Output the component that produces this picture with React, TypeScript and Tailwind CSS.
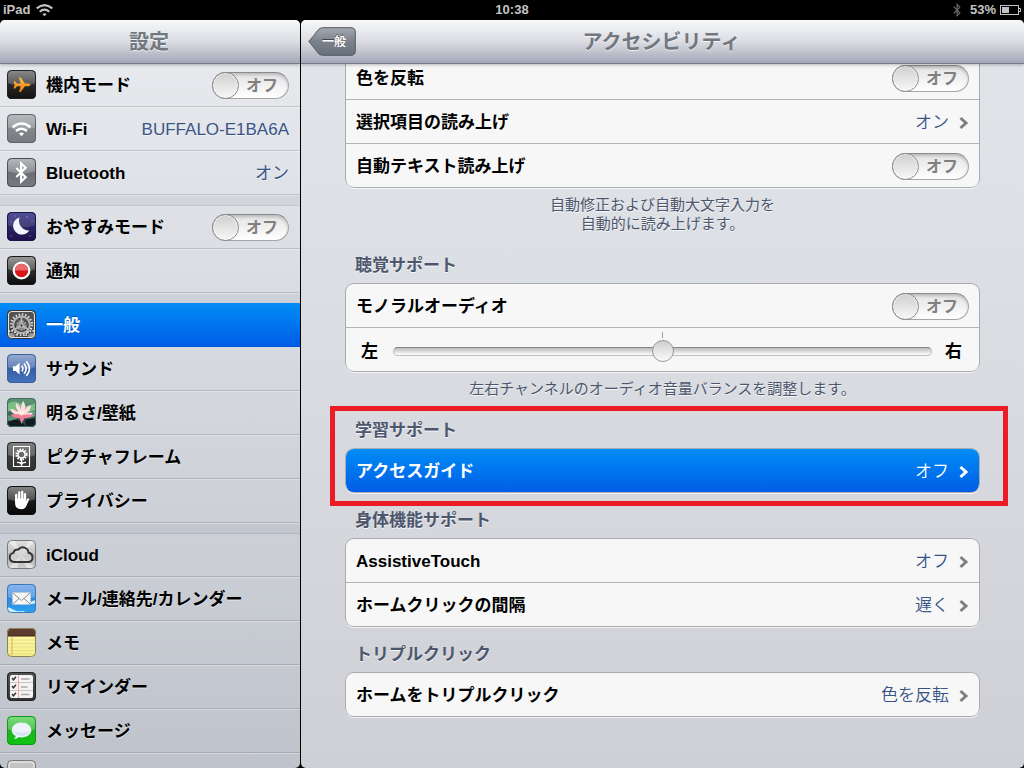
import { useState, type ReactNode } from "react";
import { FaBluetoothB, FaHandPaper, FaPlane } from "react-icons/fa";

/* ---------- Icons ---------- */

type TileProps = {
  id: string;
  top: string;
  bottom: string;
  mid?: string;
  border?: string;
  gloss?: number;
  children?: ReactNode;
};

function Tile({ id, top, bottom, mid, border = "#00000080", gloss = 0.22, children }: TileProps) {
  return (
    <svg viewBox="0 0 29 29" className="size-[29px] shrink-0" aria-hidden="true">
      <defs>
        <linearGradient id={`${id}-bg`} x1="0" y1="0" x2="0" y2="1">
          <stop offset="0" stopColor={top} />
          {mid && <stop offset="0.5" stopColor={mid} />}
          <stop offset="1" stopColor={bottom} />
        </linearGradient>
        <clipPath id={`${id}-clip`}>
          <rect width="29" height="29" rx="4.5" />
        </clipPath>
      </defs>
      <g clipPath={`url(#${id}-clip)`}>
        <rect width="29" height="29" fill={`url(#${id}-bg)`} />
        <path d="M0 0h29v13q-14.500 5-29 0z" fill="#fff" opacity={gloss} />
        {children}
      </g>
      <rect x="0.5" y="0.5" width="28" height="28" rx="4" fill="none" stroke={border} />
    </svg>
  );
}

function WifiArcs({ color }: { color: string }) {
  return (
    <g fill="none" stroke={color}>
      <path d="M5.600 13.200q8.900-7.400 17.800 0" strokeWidth="2.500" />
      <path d="M9 17q5.500-4.600 11 0" strokeWidth="2.500" />
      <path d="M12 19.600q2.500-2 5 0l-2.500 2.600z" fill={color} stroke="none" />
    </g>
  );
}

const AirplaneIcon = () => (
  <Tile id="air" top="#6b6b6b" mid="#2a2a2a" bottom="#111" border="#222">
    <defs>
      <linearGradient id="air-o" x1="0" y1="0" x2="0" y2="1">
        <stop offset="0" stopColor="#ffc14d" />
        <stop offset="1" stopColor="#f07800" />
      </linearGradient>
    </defs>
    <path
      d="M6.500 11.200h1.600l2 2.200h3.600L12 7.500h1.700l4.300 5.900h3.300q2 .3 2.300 1.400-.3 1.100-2.300 1.400H18l-4.300 5.900H12l1.700-5.900h-3.600l-2 2.200H6.500l1.200-3.600z"
      fill="url(#air-o)"
    />
  </Tile>
);

const WifiIcon = () => (
  <Tile id="wifi" top="#a3a7ab" mid="#83878c" bottom="#777b81" border="#5f6369">
    <WifiArcs color="#fff" />
  </Tile>
);

const BluetoothIcon = () => (
  <Tile id="bt" top="#a3a7ab" mid="#6c7076" bottom="#777b81" border="#4c4f55">
    <path d="M9.300 10l9.400 9.200-4.600 4.300v-18l4.600 4.300-9.400 9.200" fill="none" stroke="#fff" strokeWidth="2.200" />
  </Tile>
);

const MoonIcon = () => (
  <Tile id="moon" top="#39378a" mid="#2a2766" bottom="#1d0f4a" border="#1b1648" gloss={0.12}>
    <path d="M12.500 5.500a8.700 8.700 0 1 0 9.700 13A9.800 9.800 0 0 1 12.500 5.500z" fill="#f4f4ff" />
    <g fill="#a9a6e6">
      <circle cx="20" cy="5" r="0.700" />
      <circle cx="25" cy="9" r="0.500" />
      <circle cx="4" cy="10" r="0.600" />
      <circle cx="4" cy="24" r="0.600" />
      <circle cx="23" cy="24" r="0.600" />
      <circle cx="8" cy="4" r="0.500" />
    </g>
  </Tile>
);

const NotificationIcon = () => (
  <Tile id="notif" top="#808080" mid="#303030" bottom="#080808" border="#1a1a1a">
    <circle cx="14.500" cy="14.500" r="7.800" fill="#d91414" stroke="#fff" strokeWidth="2.200" />
    <path d="M7.800 14.500a6.700 6.700 0 0 1 13.400 0z" fill="#ea6a6a" />
  </Tile>
);

const GeneralIcon = () => (
  <Tile id="gen" top="#4c4c4c" bottom="#3c3c3c" border="#333" gloss={0.05}>
    <g fill="none">
      <circle cx="14.500" cy="14.800" r="10.300" stroke="#e0e0e0" strokeWidth="2.400" strokeDasharray="1.500 1.740" />
      <circle cx="14.500" cy="14.800" r="8.300" stroke="#b4b4b4" strokeWidth="2" />
      <circle cx="14.500" cy="15.500" r="4.500" fill="#858585" stroke="#a5a5a5" strokeWidth="1.600" strokeDasharray="1.800 1.200" />
      <path d="M14.500 14.500V6.500M14.500 15.500l7 4M14.500 15.500l-7 4" stroke="#b8b8b8" strokeWidth="1.600" />
      <circle cx="14.500" cy="15.500" r="1.700" fill="#333" stroke="#ddd" />
      <circle cx="4" cy="27" r="6" fill="#3a3a3a" stroke="#ddd" strokeWidth="2" strokeDasharray="1.500 1.300" />
      <circle cx="25" cy="27" r="6" fill="#3a3a3a" stroke="#ddd" strokeWidth="2" strokeDasharray="1.500 1.300" />
      <circle cx="4" cy="27" r="4" fill="#999" />
      <circle cx="25" cy="27" r="4" fill="#999" />
    </g>
    <rect x="1.500" y="1.500" width="26" height="26" rx="3.500" fill="none" stroke="#e4e4e4" strokeWidth="1.200" />
  </Tile>
);

const SoundIcon = () => (
  <Tile id="snd" top="#7b96c8" mid="#355da2" bottom="#4474bd" border="#3b5f9a">
    <path d="M6 12.200h2.600l4-3.400v11.600l-4-3.400H6z" fill="#fff" />
    <g fill="none" stroke="#fff" strokeWidth="1.600">
      <path d="M14.800 11.800q2.200 2.800 0 5.600" />
      <path d="M17 9.400q4.300 5.200 0 10.400" />
      <path d="M19.300 7.200q6.200 7.400 0 14.800" />
    </g>
  </Tile>
);

const BrightnessIcon = () => (
  <Tile id="lotus" top="#4d8a62" mid="#3d6d5c" bottom="#1d3a44" border="#3f6b60" gloss={0.1}>
    <path d="M0 6q8-5 14 0t15-2v8q-9 4-15 1T0 14z" fill="#7ebd84" />
    <path d="M0 17l10 2-2 5-8-2zM19 14l10-2v6l-8 2z" fill="#60967d" />
    <path d="M0 25q8-6 13-2l7 6H0zM18 22l11-2v9H20z" fill="#111c22" />
    <path d="M14.500 18Q5 17 3 11q5 0 8 3Q8 8 9 5q4 2 5 7 0-6 2-9 3 3 2 9 2-4 6-5 0 5-4 8 4-1 6 0-3 5-11.500 3z" fill="#fbdde0" />
    <path d="M14.500 17q-7-2-11 0 4 4 9 3l2 6 3-6q5 1 10-3-7-1-13 0z" fill="#ef7f96" />
    <path d="M11 13l3.500 5 3.500-5-3 1z" fill="#fff5cf" />
  </Tile>
);

const PictureFrameIcon = () => (
  <Tile id="frame" top="#5c5c5c" mid="#3c3c3c" bottom="#303030" border="#262626">
    <rect x="6.500" y="4.500" width="16" height="20" fill="none" stroke="#fff" strokeWidth="1.100" />
    <circle cx="14.500" cy="12.500" r="5" fill="none" stroke="#fff" strokeWidth="2.200" strokeDasharray="1.500 1.120" />
    <circle cx="14.500" cy="12.500" r="3.600" fill="none" stroke="#fff" strokeWidth="1.600" />
    <path d="M14.500 17v7M10 20.500q3.500-.5 4.500 2 1-2.500 4.500-2" fill="none" stroke="#fff" strokeWidth="1.300" />
  </Tile>
);

const PrivacyIcon = () => (
  <Tile id="priv" top="#666" mid="#1c1c1c" bottom="#050505" border="#111">
    <g stroke="#fff" strokeLinecap="round" fill="none">
      <path d="M9.200 15V9M12.200 14V6.500M15.200 14V6M18 15V8.200" strokeWidth="2.300" />
      <path d="M18.500 18.500l2.600-5" strokeWidth="2.200" />
    </g>
    <path d="M8.050 12.500h11.100v4l1.800-1.500-1.400 4.600q-1.200 3.600-5.300 3.600-6.200-.2-6.200-6.200z" fill="#fff" />
  </Tile>
);

const CloudIcon = () => (
  <Tile id="cloud" top="#d8d8d8" mid="#b0b0b0" bottom="#cfcfcf" border="#777">
    <path d="M0 0l14 15L8 0zM29 0L14 15 22 0zM0 29l14-14L10 29zM29 29L14 15l6 14z" fill="#fff" opacity="0.450" />
    <path
      d="M7 22a4.600 4.600 0 0 1-.5-9.100 3.800 3.800 0 0 1 4.800-3.300 5.700 5.700 0 0 1 10.200 3.200 4.700 4.700 0 0 1 .5 9.200z"
      fill="#e4e4e4"
      fillOpacity="0.500"
      stroke="#333"
      strokeWidth="1.900"
    />
  </Tile>
);

const MailIcon = () => (
  <Tile id="mail" top="#6d9ee8" mid="#2f86e0" bottom="#2aa6f0" border="#3a78b8">
    <path d="M0 23q4 1 7 3t10 1l2 2H0zM21 19q3 0 4-2l4-1v3q-4 2-8 0z" fill="#e8f8ff" opacity="0.900" />
    <path d="M5.500 8.500h18v12h-18z" fill="#f7f7f7" stroke="#b9c4cf" strokeWidth="0.600" />
    <path d="M6 9l8.500 7.500L23 9M6 20l6-5.500M23 20l-6-5.500" fill="none" stroke="#8b8b8b" strokeWidth="1" />
  </Tile>
);

const NotesIcon = () => (
  <Tile id="notes" top="#fff9a8" bottom="#f5ee86" border="#8d8450" gloss={0}>
    <path d="M0 0h29v8H0z" fill="#5b3a30" />
    <path d="M0 8h29" stroke="#3d241c" strokeWidth="1" />
    <path d="M0 12h29M0 15.500h29M0 19h29M0 22.500h29M0 26h29" stroke="#e3dc92" strokeWidth="0.800" />
    <path d="M5 9v20" stroke="#d9ae64" strokeWidth="1" />
  </Tile>
);

const RemindersIcon = () => (
  <Tile id="rem" top="#555" bottom="#333" border="#222" gloss={0}>
    <rect x="3" y="3" width="23" height="23" rx="2" fill="#f4f4f4" />
    <path d="M3 10.500h23M3 18.500h23" stroke="#c6c6c6" strokeWidth="1" />
    <path d="M11.500 3v23" stroke="#f5a3a3" strokeWidth="1" />
    <path d="M14 7h8.500M14 15h6.500M14 22.500h8.500" stroke="#aaa" strokeWidth="1.600" />
    <path d="M5 6l1.500 1.800L9 4.800M5 14l1.500 1.800L9 12.800M5 22l1.500 1.800L9 20.800" fill="none" stroke="#333" strokeWidth="1.400" />
  </Tile>
);

const MessagesIcon = () => (
  <Tile id="msg" top="#5cd35c" mid="#1fb41f" bottom="#0fc40f" border="#14931c">
    <path
      d="M14.500 6.500c-5.700 0-9.800 3.200-9.800 7.500 0 2.700 1.500 4.800 4 6.100-.2 1.400-1 2.300-2 3 2.300 0 4-.8 5-2 .9.200 1.800.3 2.800.3 5.700 0 9.800-3.200 9.800-7.400s-4.100-7.500-9.800-7.500z"
      fill="#eef3fb"
    />
    <path d="M6 15q8.500 3 17 0-1.500 4.500-8.500 5Q7.500 19.500 6 15z" fill="#d5e2f4" />
  </Tile>
);

const FaceTimeIcon = () => (
  <Tile id="ft" top="#b9b9b7" bottom="#9a9a98" border="#777">
    <rect x="2" y="2" width="25" height="25" rx="3" fill="none" stroke="#efefef" />
  </Tile>
);

const Chevron = ({ light }: { light?: boolean }) => (
  <svg viewBox="0 0 10 14" className="h-[14px] w-[10px]" aria-hidden="true">
    <path d="M1.500 2l5.500 5-5.500 5" fill="none" stroke={light ? "#fff" : "#7f7f7f"} strokeWidth="3" />
  </svg>
);

/* ---------- Controls ---------- */

function Switch({ id }: { id: string }) {
  const [on, setOn] = useState(false);
  return (
    <span className="relative flex h-[27px] w-[77px] items-center">
      <input
        id={id}
        type="checkbox"
        role="switch"
        checked={on}
        onChange={(e) => setOn(e.target.checked)}
        className="h-full w-full appearance-none rounded-full border border-[#a5a5a7] border-t-[#8b8b8d] bg-linear-to-b from-[#e3e3e4] to-white shadow-[inset_0_2px_3px_#0000002e] before:-ml-px before:-mt-px before:block before:size-[27px] before:rounded-full before:border before:border-[#8c8c8e] before:bg-linear-to-b before:from-[#cfcfcf] before:to-[#f8f8f8] before:content-[''] before:shadow-[inset_0_0_0_1px_#ffffff99] checked:bg-[#0a7df0] checked:from-[#0560d8] checked:to-[#3b9bf8] checked:before:ml-[49px]"
      />
      <span
        aria-hidden="true"
        className={`pointer-events-none absolute text-base leading-5 font-bold ${on ? "left-3 text-white" : "left-[34px] text-[#808080]"}`}
      >
        {on ? "オン" : "オフ"}
      </span>
    </span>
  );
}

/* ---------- Sidebar ---------- */

type Item = {
  label: string;
  icon: ReactNode;
  value?: string;
  toggle?: string;
  selected?: boolean;
};

const sidebarGroups: Item[][] = [
  [
    { label: "機内モード", icon: <AirplaneIcon />, toggle: "airplane" },
    { label: "Wi-Fi", icon: <WifiIcon />, value: "BUFFALO-E1BA6A" },
    { label: "Bluetooth", icon: <BluetoothIcon />, value: "オン" },
  ],
  [
    { label: "おやすみモード", icon: <MoonIcon />, toggle: "dnd" },
    { label: "通知", icon: <NotificationIcon /> },
  ],
  [
    { label: "一般", icon: <GeneralIcon />, selected: true },
    { label: "サウンド", icon: <SoundIcon /> },
    { label: "明るさ/壁紙", icon: <BrightnessIcon /> },
    { label: "ピクチャフレーム", icon: <PictureFrameIcon /> },
    { label: "プライバシー", icon: <PrivacyIcon /> },
  ],
  [
    { label: "iCloud", icon: <CloudIcon /> },
    { label: "メール/連絡先/カレンダー", icon: <MailIcon /> },
    { label: "メモ", icon: <NotesIcon /> },
    { label: "リマインダー", icon: <RemindersIcon /> },
    { label: "メッセージ", icon: <MessagesIcon /> },
    { label: "", icon: <FaceTimeIcon /> },
  ],
];

function SidebarRow({ item }: { item: Item }) {
  const base = "flex h-11 w-full items-center gap-2.5 pr-[11px] pl-[7px] text-left text-[17px] leading-6 border-b";
  if (item.toggle) {
    return (
      <div className={`${base} border-[#00000024] shadow-[0_1px_0_#ffffff59]`}>
        {item.icon}
        <div className="flex flex-1 items-center pt-0.5">
          <label htmlFor={item.toggle} className="flex-1 font-bold">
            {item.label}
          </label>
          <Switch id={item.toggle} />
        </div>
      </div>
    );
  }
  return (
    <button
      type="button"
      className={`${base} ${
        item.selected
          ? "border-[#0054d8] bg-linear-to-b from-[#058cf5] to-[#015de6] text-white [text-shadow:0_-1px_0_#0000004d]"
          : "border-[#00000024] text-black shadow-[0_1px_0_#ffffff59] [text-shadow:0_1px_0_#ffffff80]"
      }`}
    >
      {item.icon}
      <span className="flex flex-1 items-center pt-0.5 whitespace-nowrap">
        <span className="flex-1 font-bold">{item.label}</span>
        {item.value && <span className="text-[#385487]">{item.value}</span>}
      </span>
    </button>
  );
}

/* ---------- Detail pane ---------- */

function Row({
  label,
  value,
  toggle,
  selected,
}: {
  label: string;
  value?: string;
  toggle?: string;
  selected?: boolean;
}) {
  const base = "flex h-11 w-full items-center border-b border-[#b4b5b9] px-2.5 pt-0.5 text-left text-[17px] leading-6";
  if (toggle) {
    return (
      <div className={base}>
        <label htmlFor={toggle} className="flex-1 font-bold">
          {label}
        </label>
        <Switch id={toggle} />
      </div>
    );
  }
  return (
    <button
      type="button"
      className={`${base} ${selected ? "bg-linear-to-b from-[#058cf5] to-[#015de6] text-white" : ""}`}
    >
      <span className="flex-1 font-bold">{label}</span>
      <span className={`mr-2.5 font-[350] ${selected ? "" : "text-[#385487]"}`}>{value}</span>
      <Chevron light={selected} />
    </button>
  );
}

const Group = ({ children, cut }: { children: ReactNode; cut?: boolean }) => (
  <div
    className={`overflow-hidden border-x border-[#a9abb0] bg-[#f7f7f7] shadow-[0_1px_0_#ffffffb3] [&>*:last-child]:border-[#a9abb0] ${
      cut ? "rounded-b-[9px]" : "rounded-[9px] border-t"
    } [&>*:last-child]:rounded-b-lg`}
  >
    {children}
  </div>
);

const Heading = ({ children }: { children: ReactNode }) => (
  <h2 className="mt-[18px] mb-[7px] pl-2.5 text-[17px] leading-5 font-bold text-[#4c566c] [text-shadow:0_1px_0_#ffffffcc]">
    {children}
  </h2>
);

const Footnote = ({ children }: { children: ReactNode }) => (
  <p className="pt-[7px] pb-[5px] text-center text-[15px] leading-[19px] text-[#4c566c] [text-shadow:0_1px_0_#ffffffcc]">
    {children}
  </p>
);

const barClass =
  "relative z-10 flex h-11 shrink-0 items-center justify-center border-b border-[#747a89] bg-linear-to-b from-[#f7f8fa] via-[#dcdde3] to-[#a4a7b7] pr-0.5 shadow-[0_1px_3px_#00000040]";
const titleClass = "text-xl leading-6 font-bold text-[#717880] [text-shadow:0_1px_0_#ffffffb3]";

export default function App() {
  const [balance, setBalance] = useState(50);
  return (
    <div className="flex h-screen flex-col overflow-hidden bg-black font-['Liberation_Sans','Noto_Sans_CJK_JP',sans-serif] text-black">
      <header className="grid h-5 shrink-0 grid-cols-3 items-center text-[13px] leading-5 font-bold text-[#c4c4c4]">
        <div className="flex items-center gap-1.5 pl-[3px]">
          <span>iPad</span>
          <svg viewBox="5 7 19 16" className="h-[14px] w-[17px]" aria-hidden="true">
            <WifiArcs color="#c4c4c4" />
          </svg>
        </div>
        <time className="text-center">10:38</time>
        <div className="flex items-center justify-end pr-[3px]">
          <FaBluetoothB size={14} className="mr-1.5 text-[#6a6a6a]" />
          <span className="mr-1">53%</span>
          <svg viewBox="0 0 21 11" className="h-[11px] w-[21px]" aria-hidden="true">
            <rect x="0.500" y="0.500" width="18" height="9" fill="none" stroke="#c4c4c4" />
            <rect x="2" y="2" width="7" height="6" fill="#c4c4c4" />
            <path d="M19 3.500h1.500v3H19" fill="none" stroke="#c4c4c4" />
          </svg>
        </div>
      </header>

      <div className="flex min-h-0 flex-1 gap-px">
        <aside className="flex w-75 shrink-0 flex-col overflow-hidden rounded-[5px] bg-linear-to-b from-[#e9ebef] to-[#bfc3cb]">
          <div className={barClass}>
            <h1 className={titleClass}>設定</h1>
          </div>
          <nav className="-mt-px flex min-h-0 flex-1 flex-col gap-2.5 overflow-hidden">
            {sidebarGroups.map((group, i) => (
              <div key={i} className="shrink-0 shadow-[0_10px_0_#8f96a826,inset_0_1px_0_#0000001f]">
                {group.map((item, j) => (
                  <SidebarRow key={j} item={item} />
                ))}
              </div>
            ))}
          </nav>
        </aside>

        <main className="flex min-w-0 flex-1 flex-col overflow-hidden rounded-[5px] bg-linear-to-b from-[#e2e6eb] to-[#cfd0d6]">
          <div className={barClass}>
            <button
              type="button"
              className="absolute left-[7px] flex h-[29px] w-12 items-center justify-center pl-1 text-xs leading-4 font-bold text-white [text-shadow:0_-1px_0_#00000080]"
            >
              <svg viewBox="0 0 48 29" className="absolute inset-0 h-full w-full" aria-hidden="true">
                <defs>
                  <linearGradient id="back-bg" x1="0" y1="0" x2="0" y2="1">
                    <stop offset="0" stopColor="#a4a9b0" />
                    <stop offset="0.500" stopColor="#7b828b" />
                    <stop offset="1" stopColor="#68707b" />
                  </linearGradient>
                </defs>
                <path
                  d="M.8 14.500Q6 8.500 9.800 3.300 11.800.7 14.500.7H43q4.300 0 4.300 4.300v19q0 4.300-4.300 4.300H14.500q-2.700 0-4.700-2.600Q6 20.500.8 14.500z"
                  fill="url(#back-bg)"
                  stroke="#545a63"
                />
              </svg>
              <span className="relative">一般</span>
            </button>
            <h1 className={titleClass}>アクセシビリティ</h1>
          </div>

          <div className="min-h-0 flex-1 overflow-hidden px-11">
            <section className="-mt-2">
              <Group cut>
                <Row label="色を反転" toggle="invert" />
                <Row label="選択項目の読み上げ" value="オン" />
                <Row label="自動テキスト読み上げ" toggle="autospeak" />
              </Group>
              <Footnote>
                自動修正および自動大文字入力を
                <br />
                自動的に読み上げます。
              </Footnote>
            </section>

            <section>
              <Heading>聴覚サポート</Heading>
              <Group>
                <Row label="モノラルオーディオ" toggle="mono" />
                <div className="flex h-11 items-center border-b border-[#b4b5b9] pt-1 pr-[17px] pl-[15px] text-[17px] leading-6 font-bold">
                  <label htmlFor="balance">左</label>
                  <div className="relative mr-[13px] ml-[15px] flex flex-1 justify-center">
                    <span className="absolute -top-2 h-1.5 w-px bg-[#a0a0a0]" />
                    <input
                      id="balance"
                      type="range"
                      min={0}
                      max={100}
                      value={balance}
                      onChange={(e) => setBalance(Number(e.target.value))}
                      className="relative block h-[23px] w-full appearance-none bg-transparent [&::-webkit-slider-runnable-track]:h-[9px] [&::-webkit-slider-runnable-track]:rounded-full [&::-webkit-slider-runnable-track]:border [&::-webkit-slider-runnable-track]:border-[#c0c0c0] [&::-webkit-slider-runnable-track]:border-t-[#858585] [&::-webkit-slider-runnable-track]:bg-linear-to-b [&::-webkit-slider-runnable-track]:from-[#bcbcbc] [&::-webkit-slider-runnable-track]:to-white [&::-webkit-slider-thumb]:-mt-2 [&::-webkit-slider-thumb]:size-[22px] [&::-webkit-slider-thumb]:appearance-none [&::-webkit-slider-thumb]:rounded-full [&::-webkit-slider-thumb]:border [&::-webkit-slider-thumb]:border-[#999] [&::-webkit-slider-thumb]:bg-linear-to-b [&::-webkit-slider-thumb]:from-[#cfcfcf] [&::-webkit-slider-thumb]:to-[#fafafa]"
                    />
                  </div>
                  <span>右</span>
                </div>
              </Group>
              <Footnote>左右チャンネルのオーディオ音量バランスを調整します。</Footnote>
            </section>

            <section className="relative">
              <Heading>学習サポート</Heading>
              <Group>
                <Row label="アクセスガイド" value="オフ" selected />
              </Group>
              <div className="pointer-events-none absolute -top-[15px] -right-7 -bottom-[13px] -left-[15px] border-5 border-[#ed1c24]" />
            </section>

            <section>
              <Heading>身体機能サポート</Heading>
              <Group>
                <Row label="AssistiveTouch" value="オフ" />
                <Row label="ホームクリックの間隔" value="遅く" />
              </Group>
            </section>

            <section>
              <Heading>トリプルクリック</Heading>
              <Group>
                <Row label="ホームをトリプルクリック" value="色を反転" />
              </Group>
            </section>
          </div>
        </main>
      </div>
    </div>
  );
}
